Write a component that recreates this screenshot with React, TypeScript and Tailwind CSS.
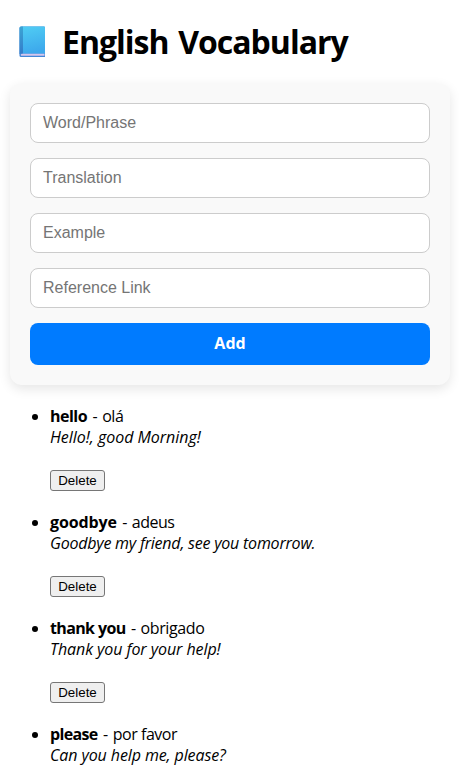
const fields = ["Word/Phrase", "Translation", "Example", "Reference Link"];

const words = [
  { word: "hello", translation: "olá", example: "Hello!, good Morning!", wordGap: "tracking-[-0.5px]", restGap: "tracking-[-0.4px]", exampleGap: "tracking-[-0.03px]" },
  { word: "goodbye", translation: "adeus", example: "Goodbye my friend, see you tomorrow.", wordGap: "tracking-[-0.12px]", restGap: "tracking-[-0.5px]", exampleGap: "tracking-[-0.22px]" },
  { word: "thank you", translation: "obrigado", example: "Thank you for your help!", wordGap: "tracking-[-0.63px]", restGap: "tracking-[-0.4px]", exampleGap: "tracking-[-0.07px]" },
  { word: "please", translation: "por favor", example: "Can you help me, please?", wordGap: "tracking-[-0.65px]", restGap: "tracking-[-0.45px]", exampleGap: "tracking-[-0.1px]" },
];

function BookIcon() {
  return (
    <svg className="ml-[9px] h-8 w-[27px] shrink-0" viewBox="0 0 27 32" aria-hidden="true">
      <defs>
        <linearGradient id="cover" x1="0" y1="0" x2="0.2" y2="1">
          <stop offset="0" stopColor="#50cdf4" />
          <stop offset="1" stopColor="#3da9ec" />
        </linearGradient>
        <linearGradient id="spine" x1="0" y1="0" x2="0" y2="1">
          <stop offset="0" stopColor="#3ba5d5" />
          <stop offset="1" stopColor="#347bc9" />
        </linearGradient>
      </defs>
      <path d="M2 0.5h23q1 0 1 1V31H2q-1.5 0-1.5-1.5V2Q.5.5 2 .5Z" fill="#4286d8" />
      <path d="M3 27.5h22.5v2.3H2q-1-1.5 1-2.3Z" fill="#d5c6ed" />
      <path d="M3.5.5H25q1 0 1 1v26H3.5Z" fill="url(#cover)" />
      <path d="M2 .5h2v27H2q-1 0-1.5 1V2Q.5.5 2 .5Z" fill="url(#spine)" />
    </svg>
  );
}

export default function App() {
  return (
    <main className="h-[774px] overflow-hidden bg-white font-['Open_Sans','Noto_Sans',sans-serif] text-base text-black">
      <h1 className="flex h-[83px] items-center pl-2.5 text-[32px] font-bold">
        <BookIcon />
        <span className="ml-4 whitespace-nowrap tracking-[-1px] [word-spacing:2.4px]">English Vocabulary</span>
      </h1>
      <form className="ml-2.5 flex w-[440px] flex-col gap-[15px] rounded-xl bg-[#f9f9f9] p-5 shadow-[0_4px_12px_rgba(0,0,0,0.1)]" onSubmit={(e) => e.preventDefault()}>
        {fields.map((label) => (
          <input
            key={label}
            placeholder={label}
            className="h-10 w-full rounded-lg border border-[#ccc] bg-white px-3 font-['Liberation_Sans',sans-serif] text-base text-black placeholder:text-[#757575]"
          />
        ))}
        <button className="h-[42px] rounded-lg bg-[#007bff] pb-0.5 font-bold text-white">Add</button>
      </form>
      <ul className="mt-[21px] list-disc pl-[50px]">
        {words.map((item, index) => (
          <li key={item.word} className="whitespace-nowrap pb-[21px] leading-[21px] last:pb-0">
            <strong className={item.wordGap}>{item.word}</strong>
            <span className="inline-block w-[15px] pl-px text-center">-</span>
            <span className={item.restGap}>{item.translation}</span>
            <em className={`block ${item.exampleGap}`}>{item.example}</em>
            {index < words.length - 1 && (
              <button className="mt-[22px] block h-[21px] w-[55px] rounded-[3px] border border-[#767676] bg-[#efefef] font-['Liberation_Sans',sans-serif] text-[13.333px] leading-[19px]">
                Delete
              </button>
            )}
          </li>
        ))}
      </ul>
    </main>
  );
}
